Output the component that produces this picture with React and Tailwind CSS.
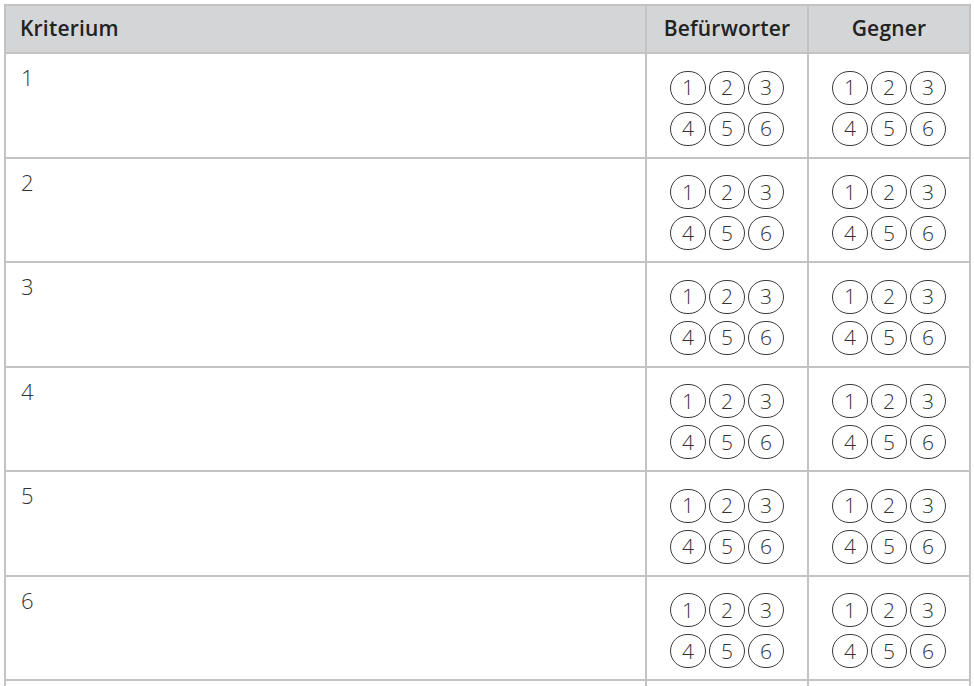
const rows = [1, 2, 3, 4, 5, 6];

const Circle = ({ n }) => (
  <div className="w-[36px] h-[34px] rounded-full border border-[#3a3a3a] flex items-center justify-center text-[21px] font-light text-[#333] leading-none">
    {n}
  </div>
);

const Scale = () => (
  <div className="grid grid-cols-3 gap-x-[3px] gap-y-[7px] w-fit mx-auto">
    {[1, 2, 3, 4, 5, 6].map((n) => (
      <Circle key={n} n={n} />
    ))}
  </div>
);

export default function App() {
  return (
    <div className="w-[974px] h-[686px] bg-white overflow-hidden pt-[4px] pl-[4px]" style={{ fontFamily: '"Open Sans", "Noto Sans", sans-serif' }}>
      <table className="border-collapse table-fixed w-[965px]">
        <colgroup>
          <col className="w-[641px]" />
          <col className="w-[162px]" />
          <col className="w-[162px]" />
        </colgroup>
        <thead>
          <tr className="bg-[#d4d5d7] h-[48px]">
            <th className="border-2 border-[#c3c3c3] text-left pl-[14px] text-[21px] tracking-[0.2px] font-semibold text-[#222]">Kriterium</th>
            <th className="border-2 border-[#c3c3c3] text-center text-[21px] tracking-[0.2px] font-semibold text-[#222]">Befürworter</th>
            <th className="border-2 border-[#c3c3c3] text-center text-[21px] tracking-[0.2px] font-semibold text-[#222]">Gegner</th>
          </tr>
        </thead>
        <tbody>
          {rows.map((r) => (
            <tr key={r} className="h-[104.5px]">
              <td className="border-2 border-[#c3c3c3] align-top pl-[15px] pt-[7px] text-[22px] font-light text-[#333]">{r}</td>
              <td className="border-2 border-[#c3c3c3] align-middle pt-[6px]">
                <Scale />
              </td>
              <td className="border-2 border-[#c3c3c3] align-middle pt-[6px]">
                <Scale />
              </td>
            </tr>
          ))}
          <tr className="h-[40px]">
            <td className="border-2 border-[#c3c3c3]"></td>
            <td className="border-2 border-[#c3c3c3]"></td>
            <td className="border-2 border-[#c3c3c3]"></td>
          </tr>
        </tbody>
      </table>
    </div>
  );
}
